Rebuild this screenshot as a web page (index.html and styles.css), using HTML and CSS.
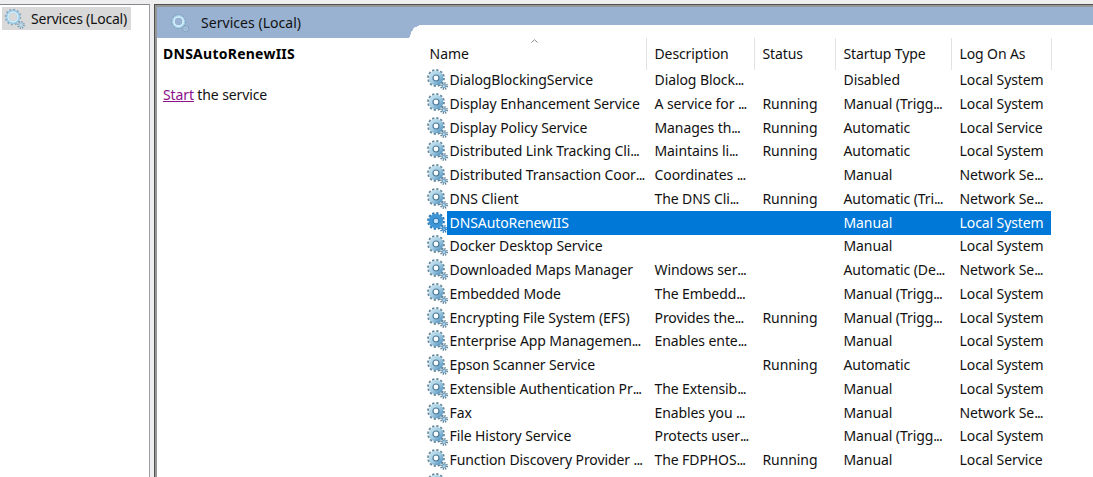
FILE: index.html
```
<!DOCTYPE html>
<html lang="en">
<head>
<meta charset="utf-8">
<title>Services</title>
<link rel="stylesheet" href="styles.css">
</head>
<body>
<svg class="defs" width="0" height="0" aria-hidden="true">
  <defs>
    <linearGradient id="metal" x1="0" y1="0" x2="1" y2="1"><stop offset="0" stop-color="#c3e0ee"/><stop offset=".5" stop-color="#a3cde4"/><stop offset="1" stop-color="#5d9ac4"/></linearGradient>
    <symbol id="gear" viewBox="0 0 21 21">
      <circle cx="9" cy="9" r="7.6" fill="none" stroke="#68899c" stroke-width="2.6" stroke-dasharray="2.2 1.78"/>
      <circle cx="9" cy="9" r="5.1" fill="none" stroke="url(#metal)" stroke-width="4.4"/>
      <circle cx="9" cy="9" r="3" fill="#fafdff" stroke="#4b7896" stroke-width="1.2"/>
      <circle cx="17" cy="17" r="3" fill="none" stroke="#5f8296" stroke-width="2" stroke-dasharray="1.2 1.156"/>
      <circle cx="17" cy="17" r="1.6" fill="#e9f5fb" stroke="#79a8c5" stroke-width="1.5"/>
    </symbol>
    <symbol id="gear-selected" viewBox="0 0 21 21">
      <circle cx="9" cy="9" r="7.6" fill="none" stroke="#2f79b4" stroke-width="2.6" stroke-dasharray="2.2 1.78"/>
      <circle cx="9" cy="9" r="5.1" fill="none" stroke="#3f96d6" stroke-width="4.4"/>
      <circle cx="9" cy="9" r="2.9" fill="#c4e2f8" stroke="#1468ae" stroke-width="1"/>
      <circle cx="17" cy="17" r="3" fill="none" stroke="#367fb8" stroke-width="2" stroke-dasharray="1.2 1.156"/>
      <circle cx="17" cy="17" r="1.6" fill="#a8d3f4" stroke="#438fcb" stroke-width="1.5"/>
    </symbol>
    <symbol id="gear-light" viewBox="0 0 21 21">
      <circle cx="9" cy="9" r="7.3" fill="none" stroke="#82a5bd" stroke-width="2" stroke-dasharray="1.9 1.92"/>
      <circle cx="9" cy="9" r="5.5" fill="none" stroke="#94c6e4" stroke-width="3.2"/>
      <circle cx="9" cy="9" r="5" fill="none" stroke="#d5edf8" stroke-width="1.4"/>
      <circle cx="17" cy="17" r="3" fill="none" stroke="#769ab2" stroke-width="1.8" stroke-dasharray="1.2 1.156"/>
      <circle cx="17" cy="17" r="1.7" fill="none" stroke="#a4cde4" stroke-width="1.3"/>
    </symbol>
    <symbol id="gear-banner" viewBox="0 0 21 21">
      <circle cx="9" cy="9" r="7" fill="none" stroke="#8099b3" stroke-width="1.4" stroke-dasharray="1.8 1.86"/>
      <circle cx="9" cy="9" r="5.4" fill="none" stroke="#a3d3ec" stroke-width="3"/>
      <circle cx="9" cy="9" r="4.9" fill="none" stroke="#def3fb" stroke-width="1.4"/>
      <circle cx="16.5" cy="16.5" r="3.2" fill="none" stroke="#7d99b4" stroke-width="1.2" stroke-dasharray="1.2 1.31"/>
      <circle cx="16.5" cy="16.5" r="1.9" fill="none" stroke="#aacde2" stroke-width="1"/>
    </symbol>
  </defs>
</svg>
<div class="console">
  <aside class="tree">
    <div class="tree-item"><svg class="tree-icon"><use href="#gear-light"/></svg><span>Services (Local)</span></div>
  </aside>
  <main class="pane">
    <header class="banner"><svg class="banner-icon"><use href="#gear-banner"/></svg><span>Services (Local)</span></header>
    <div class="content">
      <section class="details">
        <h1>DNSAutoRenewIIS</h1>
        <p><a href="#">Start</a> the service</p>
      </section>
      <section class="sheet">
        <svg class="corner" viewBox="0 0 20 13"><path d="M0 13V12H1V10L2 9V7L4 5V4L6 2H8V1H10V0H20V13Z"/></svg>
        <div class="list">
          <div class="head"><span class="name">Name<svg class="sort" viewBox="0 0 7 4"><path d="M.5 3.5 3.5.7 6.5 3.5"/></svg></span><span>Description</span><span>Status</span><span>Startup Type</span><span>Log On As</span></div>
          <div class="row"><svg><use href="#gear"/></svg><span>DialogBlockingService</span><span>Dialog Block<i>...</i></span><span></span><span>Disabled</span><span>Local System</span></div>
          <div class="row"><svg><use href="#gear"/></svg><span>Display Enhancement Service</span><span>A service for <i>...</i></span><span>Running</span><span>Manual (Trigg<i>...</i></span><span>Local System</span></div>
          <div class="row"><svg><use href="#gear"/></svg><span>Display Policy Service</span><span>Manages th<i>...</i></span><span>Running</span><span>Automatic</span><span>Local Service</span></div>
          <div class="row"><svg><use href="#gear"/></svg><span>Distributed Link Tracking Cli<i>...</i></span><span>Maintains li<i>...</i></span><span>Running</span><span>Automatic</span><span>Local System</span></div>
          <div class="row"><svg><use href="#gear"/></svg><span>Distributed Transaction Coor<i>...</i></span><span>Coordinates <i>...</i></span><span></span><span>Manual</span><span>Network Se<i>...</i></span></div>
          <div class="row"><svg><use href="#gear"/></svg><span>DNS Client</span><span>The DNS Cli<i>...</i></span><span>Running</span><span>Automatic (Tri<i>...</i></span><span>Network Se<i>...</i></span></div>
          <div class="row selected"><svg><use href="#gear-selected"/></svg><span>DNSAutoRenewIIS</span><span></span><span></span><span>Manual</span><span>Local System</span></div>
          <div class="row"><svg><use href="#gear"/></svg><span>Docker Desktop Service</span><span></span><span></span><span>Manual</span><span>Local System</span></div>
          <div class="row"><svg><use href="#gear"/></svg><span>Downloaded Maps Manager</span><span>Windows ser<i>...</i></span><span></span><span>Automatic (De<i>...</i></span><span>Network Se<i>...</i></span></div>
          <div class="row"><svg><use href="#gear"/></svg><span>Embedded Mode</span><span>The Embedd<i>...</i></span><span></span><span>Manual (Trigg<i>...</i></span><span>Local System</span></div>
          <div class="row"><svg><use href="#gear"/></svg><span>Encrypting File System (EFS)</span><span>Provides the<i>...</i></span><span>Running</span><span>Manual (Trigg<i>...</i></span><span>Local System</span></div>
          <div class="row"><svg><use href="#gear"/></svg><span>Enterprise App Managemen<i>...</i></span><span>Enables ente<i>...</i></span><span></span><span>Manual</span><span>Local System</span></div>
          <div class="row"><svg><use href="#gear"/></svg><span>Epson Scanner Service</span><span></span><span>Running</span><span>Automatic</span><span>Local System</span></div>
          <div class="row"><svg><use href="#gear"/></svg><span>Extensible Authentication Pr<i>...</i></span><span>The Extensib<i>...</i></span><span></span><span>Manual</span><span>Local System</span></div>
          <div class="row"><svg><use href="#gear"/></svg><span>Fax</span><span>Enables you <i>...</i></span><span></span><span>Manual</span><span>Network Se<i>...</i></span></div>
          <div class="row"><svg><use href="#gear"/></svg><span>File History Service</span><span>Protects user<i>...</i></span><span></span><span>Manual (Trigg<i>...</i></span><span>Local System</span></div>
          <div class="row"><svg><use href="#gear"/></svg><span>Function Discovery Provider <i>...</i></span><span>The FDPHOS<i>...</i></span><span>Running</span><span>Manual</span><span>Local Service</span></div>
          <div class="row"><svg><use href="#gear"/></svg></div>
        </div>
      </section>
    </div>
  </main>
</div>
</body>
</html>
```
FILE: styles.css
```
* { box-sizing: border-box; }
body {
  margin: 0;
  height: 477px;
  overflow: hidden;
  background: #eeeeee;
  color: #111;
  font: 14px/20px "Noto Sans", "Open Sans", sans-serif;
}
.defs { position: absolute; }
.console { display: flex; gap: 4px; height: 477px; padding-top: 4px; }
.tree {
  width: 150px;
  padding: 2px 0 0 2px;
  background: #fff;
  border-top: 1px solid #85878d;
  border-right: 1px solid #9b9da8;
}
.tree-item {
  display: flex;
  align-items: center;
  width: 129px;
  height: 23px;
  background: #d9d9d9;
  letter-spacing: -.22px;
  white-space: nowrap;
}
.tree-icon { width: 21px; height: 21px; margin: 0 6px 0 2px; }
.pane {
  flex: 1;
  min-width: 0;
  background: #fff;
  border-top: 1px solid #505050;
  border-left: 1px solid #505050;
  box-shadow: inset 2px 2px 0 #979797;
  padding: 2px 0 0 2px;
}
.banner {
  display: flex;
  align-items: center;
  height: 31px;
  padding-left: 13px;
  background: #99b2d1;
  letter-spacing: .04px;
}
.banner-icon { width: 20px; height: 20px; margin-right: 11px; }
.content { display: flex; }
.details { width: 252px; padding: 6px 0 0 6px; }
h1 { margin: 0; font-size: 14px; line-height: 20px; letter-spacing: .25px; color: #000; }
p { margin: 21px 0 0; letter-spacing: -.12px; }
a { color: #8b1089; }
.sheet { flex: 1; display: flex; align-items: flex-start; margin-top: -13px; }
.corner { width: 20px; height: 13px; fill: #fff; flex: none; }
.list { flex: 1; background: #fff; padding-top: 13px; margin-left: -2px; }
.head {
  display: grid;
  grid-template-columns: 220px 108px 81px 116px 100px;
  height: 30px;
  line-height: 32px;
}
.head span { padding-left: 7.5px; border-right: 1px solid #e2e2e2; letter-spacing: -.12px; }
.head .name { position: relative; padding-left: 2.5px; letter-spacing: 0; }
.sort {
  position: absolute;
  top: 1px;
  left: 104px;
  width: 7px;
  height: 4px;
  fill: none;
  stroke: #888;
}
.row {
  display: grid;
  grid-template-columns: 20px 205px 108px 81px 116px 94px;
  height: 23.75px;
  line-height: 24px;
  letter-spacing: -.09px;
  white-space: nowrap;
}
.row svg { width: 21px; height: 21px; margin-top: 1px; }
.row span { padding-left: 2.5px; }
.row i { font-style: normal; letter-spacing: -.9px; }
.selected span { background: #0078d7; color: #fff; }
```
